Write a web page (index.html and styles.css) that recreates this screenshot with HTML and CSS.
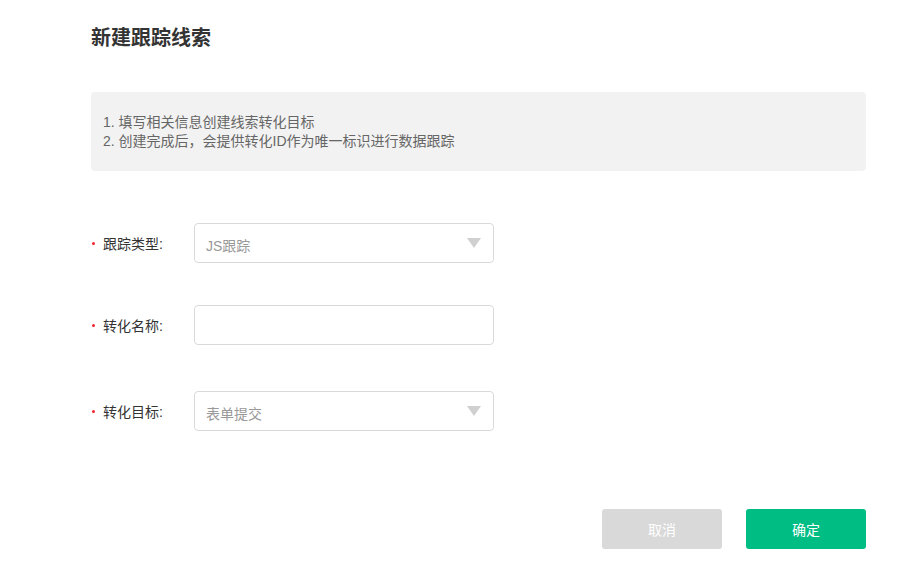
FILE: index.html
```html
<!DOCTYPE html>
<html lang="zh-CN">
<head>
  <meta charset="UTF-8" />
  <meta name="viewport" content="width=device-width, initial-scale=1.0"/>
  <title>新建跟踪线索</title>
  <link rel="stylesheet" href="styles.css">
</head>
<body>

  <div class="page">
    <h2 class="title">新建跟踪线索</h2>

    <div class="tips">
      <p>1. 填写相关信息创建线索转化目标</p>
      <p>2. 创建完成后，会提供转化ID作为唯一标识进行数据跟踪</p>
    </div>

    <div class="form">
      <div class="form-row">
        <label class="label">跟踪类型:</label>
        <div class="select">
          <span class="select-value">JS跟踪</span>
          <span class="arrow"></span>
        </div>
      </div>

      <div class="form-row">
        <label class="label">转化名称:</label>
        <input type="text" class="input" />
      </div>

      <div class="form-row form-row-last">
        <label class="label">转化目标:</label>
        <div class="select">
          <span class="select-value">表单提交</span>
          <span class="arrow"></span>
        </div>
      </div>
    </div>

    <div class="actions">
      <button class="btn btn-cancel">取消</button>
      <button class="btn btn-ok">确定</button>
    </div>
  </div>

</body>
</html>
```

FILE: styles.css
```css
body {
  margin: 0;
  font-family: "Liberation Sans", "Noto Sans CJK SC", sans-serif;
  background: #fff;
  color: #333;
}

.page {
  width: 775px;
  padding: 27px 0 0 91px;
}

.title {
  margin: 0;
  font-size: 20px;
  line-height: 22px;
  font-weight: bold;
  color: #333;
}

.tips {
  margin-top: 43px;
  background: #f2f2f2;
  border-radius: 4px;
  padding: 21px 12px 20px;
  font-size: 14px;
  color: #666;
}

.tips p {
  margin: 0;
  line-height: 19px;
}

.form {
  margin-top: 52px;
  display: flex;
  flex-direction: column;
  gap: 42px;
}

.form-row {
  display: flex;
  align-items: center;
}

.form-row-last {
  margin-top: 4px;
}

.label {
  position: relative;
  width: 91px;
  padding-left: 12px;
  font-size: 14px;
  color: #333;
}

.label::before {
  content: "";
  position: absolute;
  left: 1px;
  top: 50%;
  width: 3px;
  height: 3px;
  margin-top: -1px;
  border-radius: 50%;
  background: #f5222d;
}

.select,
.input {
  box-sizing: border-box;
  width: 300px;
  height: 40px;
  border: 1px solid #d9d9d9;
  border-radius: 4px;
  background: #fff;
}

.select {
  display: flex;
  align-items: center;
  justify-content: space-between;
  padding: 3px 12px 0 11px;
}

.select-value {
  font-size: 14px;
  color: #999;
}

.arrow {
  width: 0;
  height: 0;
  margin-top: -3px;
  border-left: 7px solid transparent;
  border-right: 7px solid transparent;
  border-top: 10px solid #d0d0d0;
}

.input {
  padding: 0 12px;
  font-size: 14px;
  outline: none;
}

.actions {
  margin-top: 78px;
  display: flex;
  justify-content: flex-end;
  gap: 24px;
}

.btn {
  width: 120px;
  height: 40px;
  border: none;
  border-radius: 3px;
  font-family: inherit;
  font-size: 14px;
  color: #fff;
  cursor: pointer;
}

.btn-cancel {
  background: #d9d9d9;
}

.btn-ok {
  background: #00bd83;
}
```
